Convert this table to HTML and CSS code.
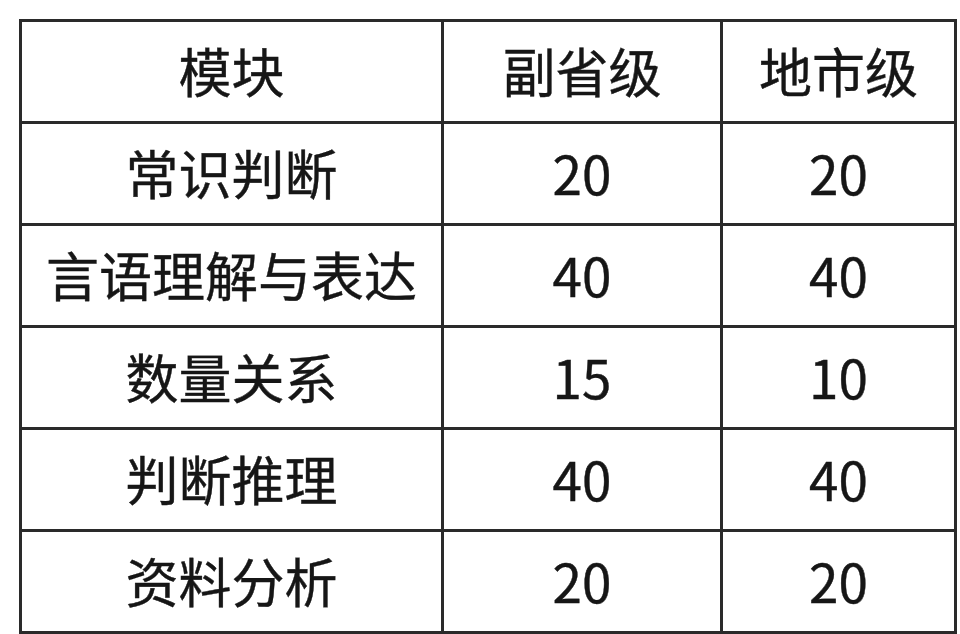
FILE: index.html
```html
<!DOCTYPE html>
<html lang="zh">
<head>
<meta charset="utf-8">
<link rel="stylesheet" href="styles.css">
</head>
<body>
<table class="score-table">
  <colgroup>
    <col class="c1">
    <col class="c2">
    <col class="c3">
  </colgroup>
  <tr><td>模块</td><td>副省级</td><td>地市级</td></tr>
  <tr><td>常识判断</td><td class="num">20</td><td class="num">20</td></tr>
  <tr><td>言语理解与表达</td><td class="num">40</td><td class="num">40</td></tr>
  <tr><td>数量关系</td><td class="num">15</td><td class="num">10</td></tr>
  <tr><td>判断推理</td><td class="num">40</td><td class="num">40</td></tr>
  <tr><td>资料分析</td><td class="num">20</td><td class="num">20</td></tr>
</table>
</body>
</html>
```
FILE: styles.css
```css
html, body {
  margin: 0;
  padding: 0;
  background: #ffffff;
}
body {
  padding: 19px 0 0 19px;
  font-family: "Noto Sans CJK SC", "Noto Sans", sans-serif;
  color: #161616;
}
.score-table {
  border-collapse: collapse;
  table-layout: fixed;
  width: 938px;
}
.c1 { width: 422px; }
.c2 { width: 279px; }
.c3 { width: 234px; }
.score-table td {
  border: 3px solid #2a2a2a;
  height: 97px;
  padding: 0 0 2px 0;
  text-align: center;
  vertical-align: middle;
  font-size: 53px;
  line-height: 1;
  -webkit-text-stroke: 0.4px #161616;
}
```
